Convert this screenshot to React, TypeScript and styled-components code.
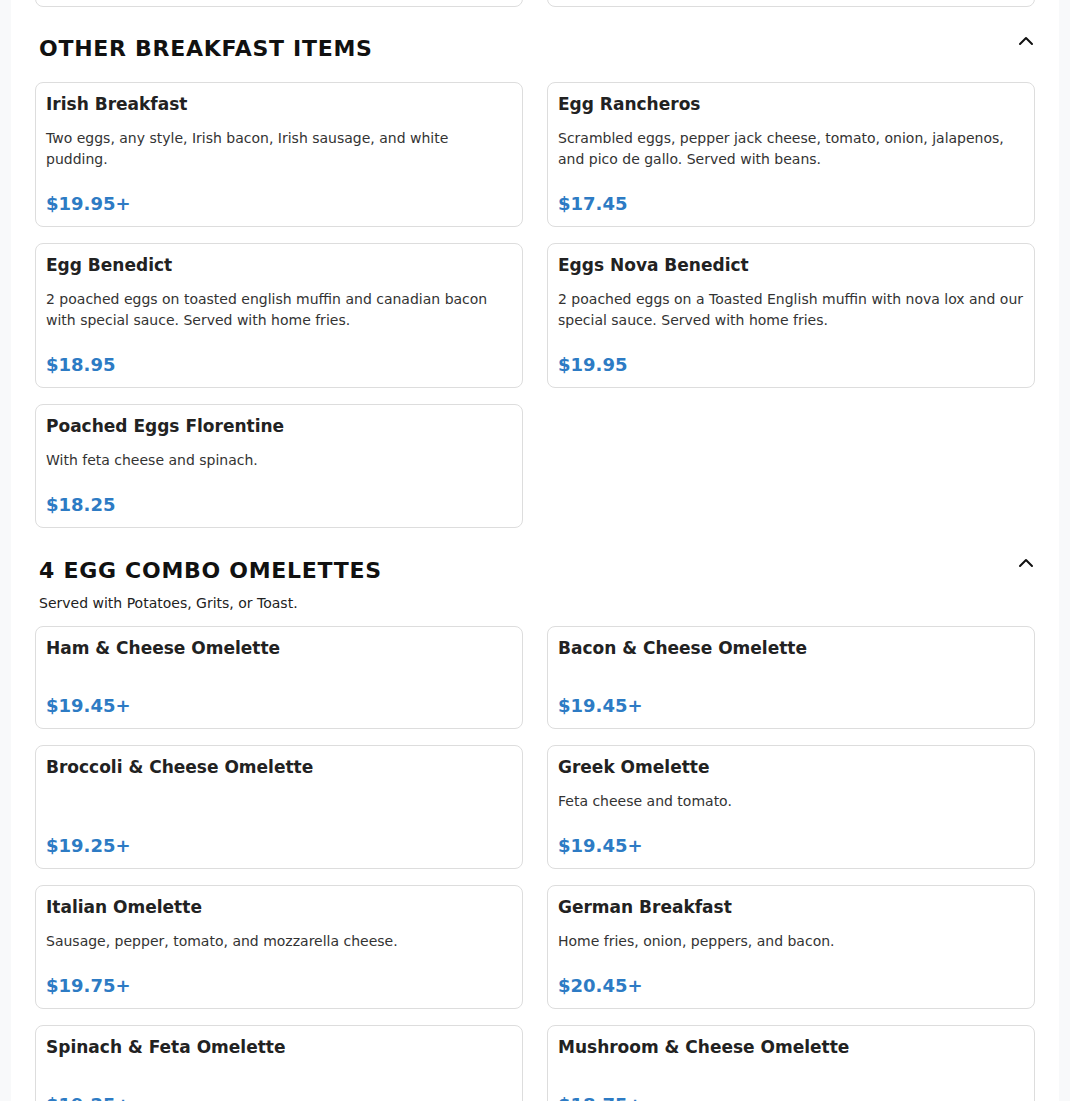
import React from 'react';
import styled, { createGlobalStyle } from 'styled-components';
import { ChevronUp } from 'lucide-react';

interface MenuItem {
    name: string;
    description?: string;
    price: string;
}

interface MenuSection {
    title: string;
    note?: string;
    items: MenuItem[];
}

// last row of the section above, mostly scrolled out of view
const previousRow: MenuItem[] = [
    { name: 'Country Breakfast', description: 'Three eggs any style with home fries, toast, and your choice of bacon or sausage.', price: '$18.45' },
    { name: 'Steak & Eggs', description: 'Grilled sirloin with two eggs any style, home fries, and toast.', price: '$26.95' },
];

const sections: MenuSection[] = [
    {
        title: 'OTHER BREAKFAST ITEMS',
        items: [
            { name: 'Irish Breakfast', description: 'Two eggs, any style, Irish bacon, Irish sausage, and white pudding.', price: '$19.95+' },
            { name: 'Egg Rancheros', description: 'Scrambled eggs, pepper jack cheese, tomato, onion, jalapenos, and pico de gallo. Served with beans.', price: '$17.45' },
            { name: 'Egg Benedict', description: '2 poached eggs on toasted english muffin and canadian bacon with special sauce. Served with home fries.', price: '$18.95' },
            { name: 'Eggs Nova Benedict', description: '2 poached eggs on a Toasted English muffin with nova lox and our special sauce. Served with home fries.', price: '$19.95' },
            { name: 'Poached Eggs Florentine', description: 'With feta cheese and spinach.', price: '$18.25' },
        ],
    },
    {
        title: '4 EGG COMBO OMELETTES',
        note: 'Served with Potatoes, Grits, or Toast.',
        items: [
            { name: 'Ham & Cheese Omelette', price: '$19.45+' },
            { name: 'Bacon & Cheese Omelette', price: '$19.45+' },
            { name: 'Broccoli & Cheese Omelette', price: '$19.25+' },
            { name: 'Greek Omelette', description: 'Feta cheese and tomato.', price: '$19.45+' },
            { name: 'Italian Omelette', description: 'Sausage, pepper, tomato, and mozzarella cheese.', price: '$19.75+' },
            { name: 'German Breakfast', description: 'Home fries, onion, peppers, and bacon.', price: '$20.45+' },
            { name: 'Spinach & Feta Omelette', price: '$19.25+' },
            { name: 'Mushroom & Cheese Omelette', price: '$18.75+' },
            { name: 'Western Omelette', description: 'Ham, pepper, and onion.', price: '$19.75+' },
            { name: 'Veggie Omelette', description: 'Tomato, onion, pepper, mushroom, and spinach.', price: '$19.75+' },
        ],
    },
];

const Card: React.FC<{ item: MenuItem }> = ({ item }) => (
    <ItemCard>
        <ItemName>{item.name}</ItemName>
        <ItemDescription>{item.description}</ItemDescription>
        <ItemPrice>{item.price}</ItemPrice>
    </ItemCard>
);

const App: React.FC = () => {
    return (
        <>
            <GlobalStyle />
            <Page>
                <Panel>
                    <TrailingRow>
                        {previousRow.map((item) => <Card key={item.name} item={item} />)}
                    </TrailingRow>

                    {sections.map((section) => (
                        <Section key={section.title}>
                            <SectionHeader $hasNote={!!section.note}>
                                <HeaderText>
                                    <SectionTitle>{section.title}</SectionTitle>
                                    {section.note && <SectionNote>{section.note}</SectionNote>}
                                </HeaderText>
                                <CollapseButton aria-label="Collapse section">
                                    <ChevronUp size={24} strokeWidth={2} />
                                </CollapseButton>
                            </SectionHeader>
                            <ItemGrid>
                                {section.items.map((item) => <Card key={item.name} item={item} />)}
                            </ItemGrid>
                        </Section>
                    ))}
                </Panel>
            </Page>
        </>
    );
};

const GlobalStyle = createGlobalStyle`
    html, body {
        margin: 0;
        padding: 0;
        background: #f8f9fa;
        font-family: "DejaVu Sans", Verdana, sans-serif;
    }
    * { box-sizing: border-box; }
`;

const Page = styled.div`
    height: 1101px;
    overflow: hidden;
`;

const Panel = styled.main`
    max-width: 1048px;
    margin: 0 auto;
    background: #ffffff;
    padding: 0 24px 40px;
    min-height: 100%;
`;

const ItemGrid = styled.div`
    display: grid;
    grid-template-columns: 1fr 1fr;
    gap: 16px 24px;
`;

const TrailingRow = styled(ItemGrid)`
    margin-top: -138px;
`;

const Section = styled.section`
    margin-top: 28px;

    & + & {
        margin-top: 29px;
    }
`;

const SectionHeader = styled.div<{ $hasNote: boolean }>`
    display: flex;
    align-items: flex-start;
    justify-content: space-between;
    padding-left: 4px;
    margin-bottom: ${({ $hasNote }) => ($hasNote ? 12 : 13)}px;
`;

const HeaderText = styled.div`
    display: flex;
    flex-direction: column;
`;

const SectionTitle = styled.h2`
    margin: 1px 0 7px;
    font-size: 22px;
    line-height: 26px;
    font-weight: 700;
    letter-spacing: 0.72px;
    color: #111111;
`;

const SectionNote = styled.p`
    margin: 2px 0 0;
    font-size: 14px;
    line-height: 21px;
    color: #222222;
`;

const CollapseButton = styled.button`
    display: flex;
    align-items: center;
    justify-content: center;
    width: 24px;
    height: 24px;
    margin: -6px -3px 0 0;
    padding: 0;
    border: none;
    background: transparent;
    color: #111111;
    cursor: pointer;
`;

const ItemCard = styled.article`
    display: flex;
    flex-direction: column;
    padding: 11px 10px 10px;
    border: 1px solid #dddddd;
    border-radius: 8px;
    background: #ffffff;
`;

const ItemName = styled.h3`
    margin: 0 0 14px;
    font-size: 17px;
    line-height: 20px;
    font-weight: 700;
    color: #222222;
`;

const ItemDescription = styled.p`
    margin: 0 0 22px;
    font-size: 14px;
    line-height: 21px;
    color: #333333;
`;

const ItemPrice = styled.div`
    margin-top: auto;
    font-size: 18px;
    line-height: 24px;
    font-weight: 700;
    color: #2d7bc4;
`;

export default App;
